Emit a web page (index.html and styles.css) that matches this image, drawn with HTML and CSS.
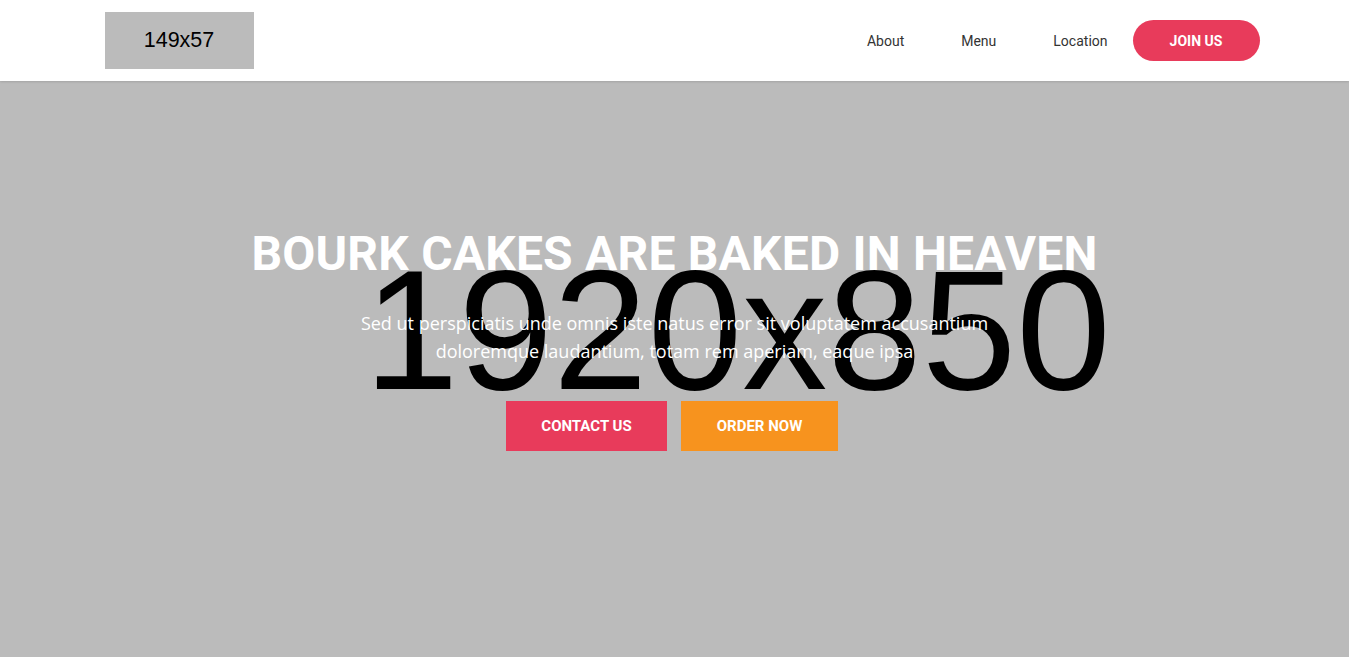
FILE: index.html
```html
<!DOCTYPE html>
<html lang="en">
<head>
<meta charset="utf-8">
<title>Bourk Cakes</title>
<link rel="stylesheet" href="styles.css">
</head>
<body>
<header class="site-header">
  <div class="container header-inner">
    <a class="logo" href="#">149x57</a>
    <nav class="nav">
      <a class="nav-link" href="#">About</a>
      <a class="nav-link" href="#">Menu</a>
      <a class="nav-link" href="#">Location</a>
      <a class="btn-join" href="#">JOIN US</a>
    </nav>
  </div>
</header>
<section class="hero">
  <div class="hero-bg">1920x850</div>
  <div class="hero-content">
    <h1 class="hero-title">BOURK CAKES ARE BAKED IN HEAVEN</h1>
    <p class="hero-text">Sed ut perspiciatis unde omnis iste natus error sit voluptatem accusantium doloremque laudantium, totam rem aperiam, eaque ipsa</p>
    <div class="hero-actions">
      <a class="btn btn-contact" href="#">CONTACT US</a>
      <a class="btn btn-order" href="#">ORDER NOW</a>
    </div>
  </div>
</section>
</body>
</html>
```
FILE: styles.css
```css
* { box-sizing: border-box; }
html, body { margin: 0; padding: 0; }
body {
  font-family: Roboto, "Liberation Sans", sans-serif;
  background: #bbbbbb;
  overflow: hidden;
}
a { text-decoration: none; }

.site-header {
  position: relative;
  z-index: 2;
  background: #fff;
  height: 81px;
  box-shadow: 0 1px 2px rgba(0,0,0,0.12);
}
.container {
  width: 1170px;
  margin: 0 auto;
}
.header-inner {
  height: 81px;
  display: flex;
  align-items: center;
  justify-content: space-between;
  padding-left: 15px;
}
.logo {
  width: 149px;
  height: 57px;
  background: #bbbbbb;
  color: #000;
  font-family: "Liberation Sans", Arial, sans-serif;
  font-size: 21.5px;
  display: flex;
  align-items: center;
  justify-content: center;
  margin-top: -1px;
}
.nav {
  display: flex;
  align-items: center;
}
.nav-link {
  color: #333;
  font-size: 14px;
  margin-left: 57px;
}
.nav-link:first-child { margin-left: 0; }
.btn-join {
  margin-left: 25px;
  width: 127px;
  height: 41px;
  border-radius: 21px;
  background: #e83b5b;
  color: #fff;
  font-weight: 700;
  font-size: 14px;
  display: flex;
  align-items: center;
  justify-content: center;
}

.hero {
  position: relative;
  height: 600px;
  background: #bbbbbb;
}
.hero-bg {
  position: absolute;
  left: 364px;
  top: 164px;
  font-family: "Liberation Sans", Arial, sans-serif;
  font-size: 170px;
  line-height: 1;
  color: #000;
  white-space: nowrap;
}
.hero-content {
  position: relative;
  padding-top: 145px;
  text-align: center;
  color: #fff;
}
.hero-title {
  margin: 0;
  font-family: Roboto, sans-serif;
  font-weight: 700;
  font-size: 48px;
  letter-spacing: 0.2px;
  line-height: 56px;
}
.hero-text {
  width: 650px;
  margin: 27px auto 0;
  font-family: "Open Sans", sans-serif;
  font-size: 18px;
  line-height: 28px;
}
.hero-actions {
  margin-top: 36px;
  display: flex;
  justify-content: center;
  gap: 14px;
  padding-right: 5px;
}
.btn {
  height: 50px;
  display: flex;
  align-items: center;
  justify-content: center;
  color: #fff;
  font-family: Roboto, sans-serif;
  font-weight: 700;
  font-size: 15px;
}
.btn-contact { width: 161px; background: #e83b5b; }
.btn-order { width: 157px; background: #f7931e; }
```
